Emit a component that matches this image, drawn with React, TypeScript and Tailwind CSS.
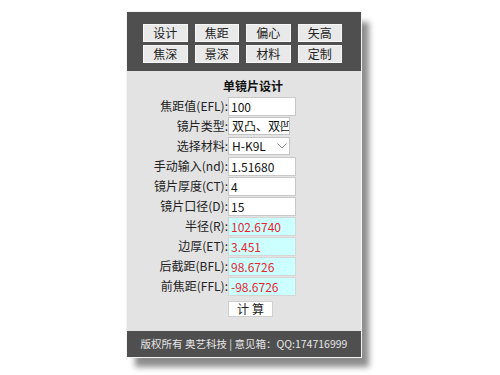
import React from "react"

const font = { fontFamily: '"Noto Sans CJK SC", "Noto Sans", sans-serif' }

const tabs = ["设计", "焦距", "偏心", "矢高", "焦深", "景深", "材料", "定制"]

type Row = { label: string; value: string; kind: "input" | "select" | "result" }

const rows: Row[] = [
    { label: "焦距值(EFL):", value: "100", kind: "input" },
    { label: "镜片类型:", value: "双凸、双凹", kind: "select" },
    { label: "选择材料:", value: "H-K9L", kind: "select" },
    { label: "手动输入(nd):", value: "1.51680", kind: "input" },
    { label: "镜片厚度(CT):", value: "4", kind: "input" },
    { label: "镜片口径(D):", value: "15", kind: "input" },
    { label: "半径(R):", value: "102.6740", kind: "result" },
    { label: "边厚(ET):", value: "3.451", kind: "result" },
    { label: "后截距(BFL):", value: "98.6726", kind: "result" },
    { label: "前焦距(FFL):", value: "-98.6726", kind: "result" },
]

function Field({ row }: { row: Row }) {
    if (row.kind === "select") {
        return (
            <div className="relative w-[62px] h-[18px] bg-white border border-[#c4c4c4] overflow-hidden">
                <div className="pl-[3px] text-[12px] leading-[16px] text-[#111] whitespace-nowrap overflow-hidden">{row.value}</div>
                <svg className="absolute right-[2px] top-[5px] w-[10px] h-[6px]" viewBox="0 0 10 6" fill="none">
                    <path d="M0.5 0.5 L5 5 L9.5 0.5" stroke="#8a8a8a" strokeWidth="1" />
                </svg>
            </div>
        )
    }
    const result = row.kind === "result"
    return (
        <input
            readOnly
            value={row.value}
            className={`w-[68px] h-[19px] px-[2px] text-[12px] leading-[17px] border outline-none ${result ? "bg-[#ccffff] text-[#e8262e] border-[#d6d6d6]" : "bg-white text-[#111] border-[#c9c9c9]"}`}
            style={font}
        />
    )
}

export default function App() {
    return (
        <div className="w-[500px] h-[375px] bg-white overflow-hidden" style={font}>
            <div className="ml-[127px] mt-[12px] w-[234px] h-[345px] flex flex-col bg-[#e3e3e3] outline outline-1 outline-[#f4f4f4] shadow-[8px_10px_6px_rgba(0,0,0,0.45)]">
                {/* Tabs */}
                <div className="h-[59px] bg-[#4f4f4f] pt-[12px] pl-[16px]">
                    <div className="grid grid-cols-4 gap-x-[7px] gap-y-[3px] w-[199px]">
                        {tabs.map((t) => (
                            <div
                                key={t}
                                className="h-[18px] bg-[#e9e9e9] border border-[#f7f7f7] flex items-center justify-center text-[12px] text-[#222]"
                            >
                                {t}
                            </div>
                        ))}
                    </div>
                </div>

                {/* Form */}
                <div className="flex-1 flex flex-col">
                    <div className="h-[25px] pt-[7px] pl-[18px] text-center text-[12px] font-bold leading-[16px] text-[#111]">单镜片设计</div>
                    <div className="flex flex-col">
                        {rows.map((r) => (
                            <div key={r.label} className="h-[20px] flex items-center">
                                <div className="w-[101px] text-right text-[12px] text-[#222] whitespace-nowrap">{r.label}</div>
                                <Field row={r} />
                            </div>
                        ))}
                    </div>
                    <div className="pl-[101px] -mt-[1px]">
                        <button className="w-[45px] h-[16px] bg-white border border-[#cfcfcf] text-[12px] leading-[14px] text-[#222] tracking-[3px] pl-[3px]">计算</button>
                    </div>
                </div>

                {/* Footer */}
                <div className="h-[26px] bg-[#4f4f4f] flex items-center justify-center text-[10.5px] text-[#e6e6e6] whitespace-nowrap">
                    版权所有 奥艺科技 | 意见箱：QQ:174716999
                </div>
            </div>
        </div>
    )
}
